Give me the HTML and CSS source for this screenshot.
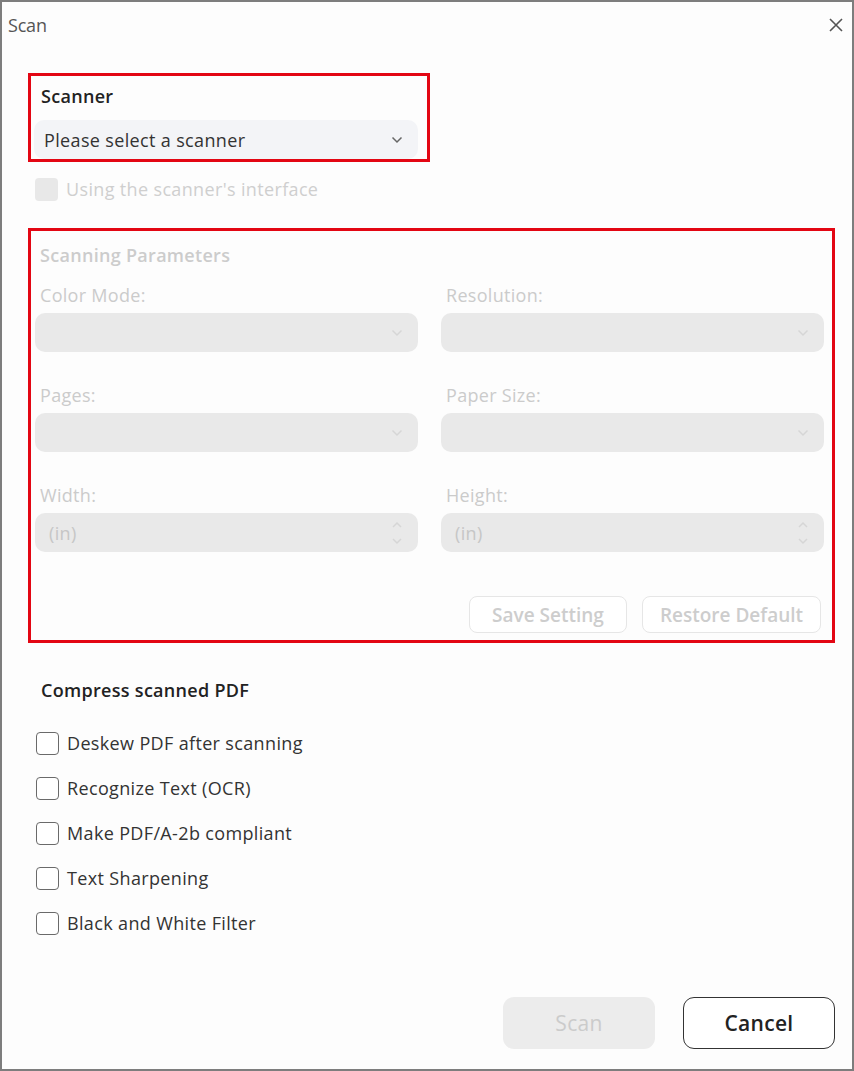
FILE: index.html
```html
<!DOCTYPE html>
<html>
<head>
<meta charset="utf-8">
<link rel="stylesheet" href="styles.css">
</head>
<body>
<div class="window">
  <div class="titlebar">
    <span class="title">Scan</span>
    <svg class="close" width="16" height="16" viewBox="0 0 16 16"><path d="M2 2 L14 14 M14 2 L2 14" stroke="#555" stroke-width="1.6" fill="none"/></svg>
  </div>
  <div class="content">
    <div class="hl hl-scanner">
      <div class="label-strong">Scanner</div>
      <div class="select select-active">
        <span>Please select a scanner</span>
        <svg class="chev" width="12" height="8" viewBox="0 0 12 8"><path d="M1.5 1.5 L6 6 L10.5 1.5" stroke="#666" stroke-width="1.5" fill="none"/></svg>
      </div>
    </div>
    <div class="check-row disabled">
      <span class="box box-disabled"></span>
      <span>Using the scanner's interface</span>
    </div>
    <div class="hl hl-params">
      <div class="params-title">Scanning Parameters</div>
      <div class="grid">
        <div class="field">
          <div class="flabel">Color Mode:</div>
          <div class="select select-disabled"><span></span><svg class="chev" width="12" height="8" viewBox="0 0 12 8"><path d="M1.5 1.5 L6 6 L10.5 1.5" stroke="#d6d6d6" stroke-width="1.5" fill="none"/></svg></div>
        </div>
        <div class="field">
          <div class="flabel">Resolution:</div>
          <div class="select select-disabled"><span></span><svg class="chev" width="12" height="8" viewBox="0 0 12 8"><path d="M1.5 1.5 L6 6 L10.5 1.5" stroke="#d6d6d6" stroke-width="1.5" fill="none"/></svg></div>
        </div>
        <div class="field">
          <div class="flabel">Pages:</div>
          <div class="select select-disabled"><span></span><svg class="chev" width="12" height="8" viewBox="0 0 12 8"><path d="M1.5 1.5 L6 6 L10.5 1.5" stroke="#d6d6d6" stroke-width="1.5" fill="none"/></svg></div>
        </div>
        <div class="field">
          <div class="flabel">Paper Size:</div>
          <div class="select select-disabled"><span></span><svg class="chev" width="12" height="8" viewBox="0 0 12 8"><path d="M1.5 1.5 L6 6 L10.5 1.5" stroke="#d6d6d6" stroke-width="1.5" fill="none"/></svg></div>
        </div>
        <div class="field">
          <div class="flabel">Width:</div>
          <div class="select select-disabled"><span class="unit">(in)</span><svg class="spin" width="12" height="26" viewBox="0 0 12 26"><path d="M2 7 L6 3 L10 7 M2 19 L6 23 L10 19" stroke="#d6d6d6" stroke-width="1.5" fill="none"/></svg></div>
        </div>
        <div class="field">
          <div class="flabel">Height:</div>
          <div class="select select-disabled"><span class="unit">(in)</span><svg class="spin" width="12" height="26" viewBox="0 0 12 26"><path d="M2 7 L6 3 L10 7 M2 19 L6 23 L10 19" stroke="#d6d6d6" stroke-width="1.5" fill="none"/></svg></div>
        </div>
      </div>
      <div class="param-buttons">
        <button class="btn-ghost btn-save">Save Setting</button>
        <button class="btn-ghost btn-restore">Restore Default</button>
      </div>
    </div>
    <div class="section-title">Compress scanned PDF</div>
    <div class="options">
      <div class="check-row"><span class="box"></span><span>Deskew PDF after scanning</span></div>
      <div class="check-row"><span class="box"></span><span>Recognize Text (OCR)</span></div>
      <div class="check-row"><span class="box"></span><span>Make PDF/A-2b compliant</span></div>
      <div class="check-row"><span class="box"></span><span>Text Sharpening</span></div>
      <div class="check-row"><span class="box"></span><span>Black and White Filter</span></div>
    </div>
  </div>
  <div class="footer">
    <button class="btn btn-scan">Scan</button>
    <button class="btn btn-cancel">Cancel</button>
  </div>
</div>
</body>
</html>
```
FILE: styles.css
```css
* { box-sizing: border-box; }
html, body { margin: 0; padding: 0; background: #fff; }
body {
  font-family: "Open Sans", "Noto Sans", sans-serif;
  color: #222;
  width: 854px;
  height: 1071px;
}
.window {
  width: 854px;
  height: 1071px;
  border: 2px solid #7d7d7d;
  background: #fdfdfd;
  display: flex;
  flex-direction: column;
}
.titlebar {
  height: 46px;
  display: flex;
  align-items: center;
  justify-content: space-between;
  padding: 0 8px 0 6px;
}
.title {
  font-size: 18px;
  color: #555;
  letter-spacing: -0.2px;
}
.content {
  padding: 25px 0 0 26px;
  flex: 1;
}
.hl {
  border: 3px solid #e30613;
}
.hl-scanner {
  width: 402px;
  padding: 8px 9px 0 3px;
  height: 89px;
}
.label-strong {
  font-size: 18px;
  font-weight: 600;
  letter-spacing: 0.3px;
  line-height: 24px;
  padding-left: 7px;
  color: #222;
}
.select {
  height: 39px;
  border-radius: 10px;
  display: flex;
  align-items: center;
  justify-content: space-between;
  padding: 0 15px 0 10px;
  font-size: 18px;
  letter-spacing: 0.35px;
}
.select-active {
  margin-top: 12px;
  background: #f3f4f7;
  color: #333;
}
.select-disabled {
  background: #e9e9e9;
  color: #c6c6c6;
}
.unit { padding-left: 4px; }
.check-row {
  display: flex;
  align-items: center;
  gap: 8px;
  font-size: 18px;
  letter-spacing: 0.35px;
  color: #333;
  height: 22px;
}
.check-row.disabled {
  color: #cfcfcf;
  margin-top: 16px;
  padding-left: 7px;
}
.box {
  width: 23px;
  height: 23px;
  border: 1.5px solid #6a6a6a;
  border-radius: 4px;
  background: #fff;
  flex: none;
}
.box-disabled {
  border: none;
  background: #e8e8e8;
}
.hl-params {
  margin-top: 28px;
  width: 807px;
  height: 415px;
  padding: 11px 8px 0 4px;
}
.params-title {
  font-size: 18px;
  font-weight: 600;
  letter-spacing: 0.3px;
  color: #cccccc;
  line-height: 26px;
  padding-left: 5px;
}
.grid {
  display: grid;
  grid-template-columns: 383px 383px;
  column-gap: 23px;
  row-gap: 31px;
  margin-top: 15px;
}
.flabel {
  font-size: 18px;
  letter-spacing: 0.3px;
  color: #cbcbcb;
  line-height: 24px;
  padding-left: 5px;
  margin-bottom: 6px;
}
.param-buttons {
  display: flex;
  justify-content: flex-end;
  gap: 15px;
  margin-top: 44px;
  padding-right: 3px;
}
.btn-ghost {
  font-family: inherit;
  font-size: 19px;
  font-weight: 600;
  color: #cdcdcd;
  background: #fff;
  border: 1.5px solid #e6e6e6;
  border-radius: 8px;
  height: 37px;
  padding: 0;
}
.btn-save { width: 158px; }
.btn-restore { width: 179px; }
.section-title {
  font-size: 18px;
  font-weight: 600;
  letter-spacing: 0.3px;
  color: #222;
  line-height: 24px;
  margin-top: 35px;
  padding-left: 13px;
}
.options {
  margin-top: 30px;
  padding-left: 8px;
  display: flex;
  flex-direction: column;
  gap: 23px;
}
.footer {
  display: flex;
  justify-content: flex-end;
  gap: 28px;
  padding: 0 17px 20px 0;
}
.btn {
  width: 152px;
  height: 52px;
  border-radius: 11px;
  font-family: inherit;
  font-size: 21px;
  font-weight: 600;
  letter-spacing: 0.3px;
}
.btn-scan {
  background: #ececec;
  border: none;
  color: #cbcbcb;
  font-weight: 500;
}
.btn-cancel {
  background: #fff;
  border: 1.5px solid #333;
  color: #222;
}
```
